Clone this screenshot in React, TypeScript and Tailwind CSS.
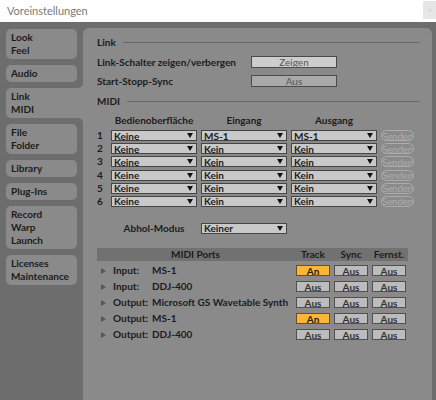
import React from 'react';

const tabs = [
  { lines: ['Look', 'Feel'] },
  { lines: ['Audio'] },
  { lines: ['Link', 'MIDI'], active: true },
  { lines: ['File', 'Folder'] },
  { lines: ['Library'] },
  { lines: ['Plug-Ins'] },
  { lines: ['Record', 'Warp', 'Launch'] },
  { lines: ['Licenses', 'Maintenance'] },
];

const midiRows = [
  { n: 1, ctrl: 'Keine', input: 'MS-1', output: 'MS-1' },
  { n: 2, ctrl: 'Keine', input: 'Kein', output: 'Kein' },
  { n: 3, ctrl: 'Keine', input: 'Kein', output: 'Kein' },
  { n: 4, ctrl: 'Keine', input: 'Kein', output: 'Kein' },
  { n: 5, ctrl: 'Keine', input: 'Kein', output: 'Kein' },
  { n: 6, ctrl: 'Keine', input: 'Kein', output: 'Kein' },
];

const ports = [
  { kind: 'Input:', name: 'MS-1', track: true },
  { kind: 'Input:', name: 'DDJ-400', track: false },
  { kind: 'Output:', name: 'Microsoft GS Wavetable Synth', track: false },
  { kind: 'Output:', name: 'MS-1', track: true },
  { kind: 'Output:', name: 'DDJ-400', track: false },
];

function Dropdown({ value }: { value: string }) {
  return (
    <div className="flex h-[11px] items-center justify-between border border-[#454545] bg-[#c9c9c9] pl-[2px] pr-[3px] leading-none">
      <span>{value}</span>
      <svg width="6" height="5" viewBox="0 0 6 5">
        <polygon points="0,0 6,0 3,5" fill="#111" />
      </svg>
    </div>
  );
}

function Section({ title }: { title: string }) {
  return (
    <div className="flex h-[14px] items-center">
      <span>{title}</span>
      <div className="ml-[7px] h-px flex-1 bg-[#686868]" />
    </div>
  );
}

function Toggle({ on, label }: { on: boolean; label: string }) {
  return (
    <div
      className={
        'mx-auto flex h-[11px] w-[34px] items-center justify-center border leading-none ' +
        (on ? 'border-[#6a5020] bg-[#ffb534] text-[#222]' : 'border-[#505050] bg-[#bcbcbc] text-[#333]')
      }
    >
      {label}
    </div>
  );
}

export default function App() {
  return (
    <div className="flex h-[400px] w-[436px] flex-col overflow-hidden bg-white font-['Lato',sans-serif]">
      <div className="flex h-[22px] shrink-0 items-center justify-between bg-white pl-[7px]">
        <span className="text-[11px] text-[#7a7a7a]">Voreinstellungen</span>
        <div className="mb-[2px] flex h-[18px] w-[13px] items-center justify-center bg-[#e6e6e6] text-[8px] text-[#cfcfcf]">×</div>
      </div>

      <div className="flex flex-1 bg-[#6d6d6d] pt-[6px] text-[10px] font-bold text-[#1c1c1c]">
        <div className="flex w-[83px] shrink-0 flex-col gap-[6px] pl-[6px] pt-px">
          {tabs.map((t, i) => (
            <div
              key={i}
              className={
                'relative bg-[#8a8a8a] py-[2px] pl-[5px] leading-[13px] ' +
                (t.active ? 'w-[77px] rounded-l-[5px]' : 'w-[71px] rounded-[5px]')
              }
            >
              {t.lines.map((l) => (
                <div key={l}>{l}</div>
              ))}
              {t.active && (
                <>
                  <div className="absolute -top-[5px] right-0 h-[5px] w-[5px] bg-[#8a8a8a]">
                    <div className="h-full w-full rounded-br-[5px] bg-[#6d6d6d]" />
                  </div>
                  <div className="absolute -bottom-[5px] right-0 h-[5px] w-[5px] bg-[#8a8a8a]">
                    <div className="h-full w-full rounded-tr-[5px] bg-[#6d6d6d]" />
                  </div>
                </>
              )}
            </div>
          ))}
        </div>

        <div className="mr-[4px] flex flex-1 flex-col rounded-t-[6px] bg-[#8a8a8a] pl-[14px] pr-[12px] pt-[7px]">
          <Section title="Link" />
          <div className="mt-[7px] flex h-[12px] items-center">
            <span className="w-[154px]">Link-Schalter zeigen/verbergen</span>
            <div className="flex h-[12px] w-[86px] items-center justify-center border border-[#4a4a4a] bg-[#cdcdcd] font-normal text-[#555]">
              Zeigen
            </div>
          </div>
          <div className="mt-[7px] flex h-[12px] items-center">
            <span className="w-[154px]">Start-Stopp-Sync</span>
            <div className="flex h-[12px] w-[86px] items-center justify-center border border-[#4a4a4a] bg-[#a9a9a9] font-normal text-[#555]">
              Aus
            </div>
          </div>

          <div className="mt-[7px]">
            <Section title="MIDI" />
          </div>

          <div className="mt-[6px] grid grid-cols-[10px_86px_86px_86px_33px] gap-x-[4px]">
            <div />
            <div className="h-[12px] text-center leading-[12px]">Bedienoberfläche</div>
            <div className="h-[12px] text-center leading-[12px]">Eingang</div>
            <div className="h-[12px] text-center leading-[12px]">Ausgang</div>
            <div />
          </div>

          <div className="mt-[4px] grid grid-cols-[10px_86px_86px_86px_33px] gap-x-[4px] gap-y-[2.2px]">
            {midiRows.map((r) => (
              <React.Fragment key={r.n}>
                <div className="h-[11px] leading-[11px]">{r.n}</div>
                <Dropdown value={r.ctrl} />
                <Dropdown value={r.input} />
                <Dropdown value={r.output} />
                <div className="flex h-[11px] items-center justify-center overflow-hidden rounded-full border border-[#acacac] text-[10px] font-normal leading-none tracking-[-0.3px] text-[#acacac]">
                  Senden
                </div>
              </React.Fragment>
            ))}
          </div>

          <div className="mt-[16px] grid grid-cols-[10px_86px_86px] gap-x-[4px]">
            <div />
            <div className="h-[11px] text-center leading-[11px]">Abhol-Modus</div>
            <Dropdown value="Keiner" />
          </div>

          <div className="mt-[14px] w-[311px]">
            <div className="grid h-[13px] grid-cols-[197px_38px_38px_38px] items-center bg-[#717171] leading-none">
              <div className="text-center">MIDI Ports</div>
              <div className="text-center">Track</div>
              <div className="text-center">Sync</div>
              <div className="text-center">Fernst.</div>
            </div>
            <div className="mt-[2px]">
              {ports.map((p, i) => (
                <div key={i} className="grid h-[16px] grid-cols-[197px_38px_38px_38px] items-center">
                  <div className="flex items-center whitespace-nowrap">
                    <svg className="ml-[4px] mr-[7px] shrink-0" width="5" height="6" viewBox="0 0 5 6">
                      <polygon points="0,0 5,3 0,6" fill="#555" />
                    </svg>
                    <span className="w-[39px] shrink-0">{p.kind}</span>
                    <span>{p.name}</span>
                  </div>
                  <Toggle on={p.track} label={p.track ? 'An' : 'Aus'} />
                  <Toggle on={false} label="Aus" />
                  <Toggle on={false} label="Aus" />
                </div>
              ))}
            </div>
          </div>
        </div>
      </div>
    </div>
  );
}
